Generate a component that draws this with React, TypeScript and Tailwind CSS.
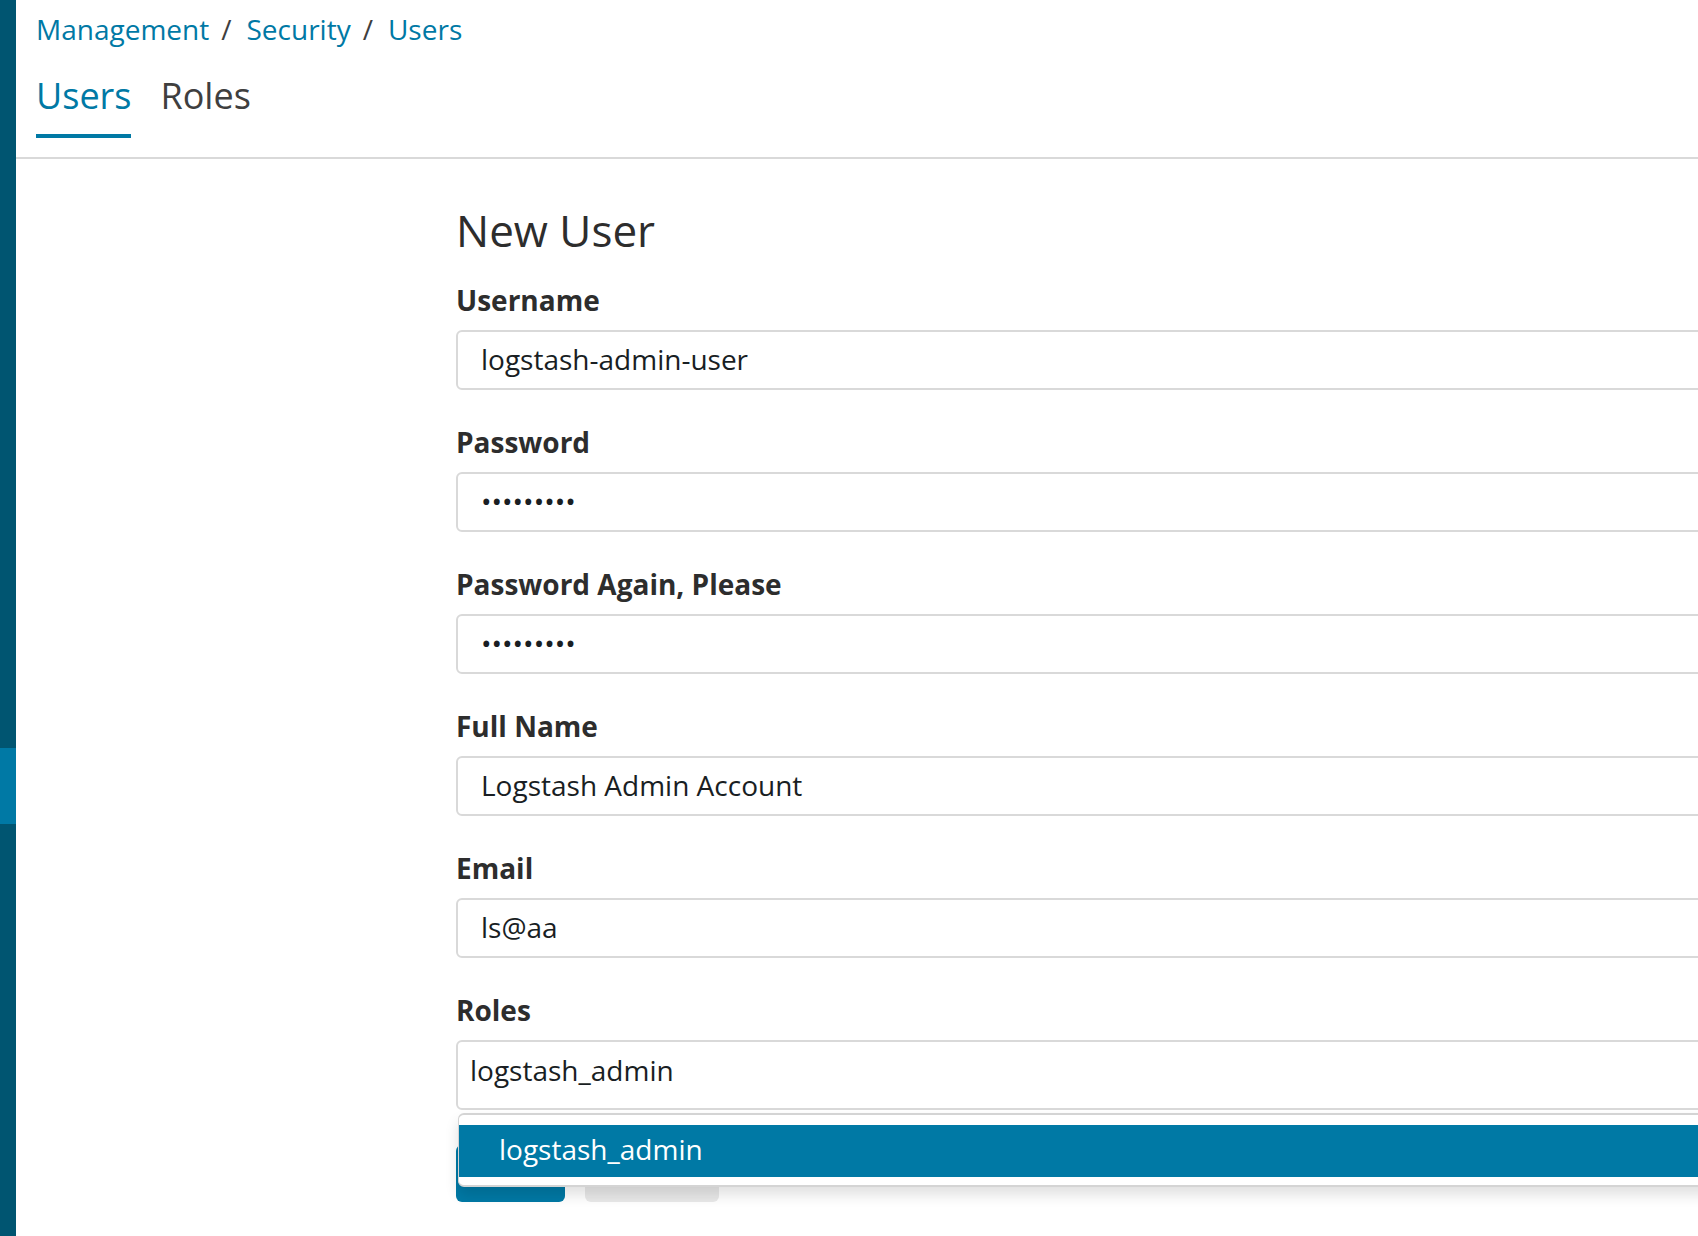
import React from 'react';

const fields = [
  { label: 'Username', value: 'logstash-admin-user' },
  { label: 'Password', value: '•••••••••' },
  { label: 'Password Again, Please', value: '•••••••••' },
  { label: 'Full Name', value: 'Logstash Admin Account' },
  { label: 'Email', value: 'ls@aa' },
];

function Sidebar() {
  return (
    <div className="flex w-[16px] shrink-0 flex-col bg-[#005571]">
      <div className="h-[748px]" />
      <div className="h-[76px] bg-[#0079a5]" />
    </div>
  );
}

function Header() {
  return (
    <div className="border-b-2 border-[#d9d9d9] pb-[19px] pl-[20px] pt-[9px]">
      {/* Breadcrumbs */}
      <div className="flex text-[28px] leading-[40px] text-[#0079a5]">
        <span>Management</span>
        <span className="ml-[12px] mr-[15px] text-[#3f3f3f]">/</span>
        <span>Security</span>
        <span className="ml-[12px] mr-[15px] text-[#3f3f3f]">/</span>
        <span>Users</span>
      </div>

      {/* Tabs */}
      <div className="mt-[23px] flex gap-[29px] text-[36px] leading-[48px]">
        <div className="border-b-4 border-[#0079a5] pb-[14px] text-[#0079a5]">Users</div>
        <div className="border-b-4 border-transparent pb-[14px] text-[#3f3f3f]">Roles</div>
      </div>
    </div>
  );
}

function Field({ label, value }: { label: string; value: string }) {
  return (
    <div className="mb-[32px]">
      <div className="mb-[10px] text-[28px] font-bold leading-[40px] text-[#2d2d2d]">{label}</div>
      <div className="flex h-[60px] items-center rounded-[6px] border-2 border-[#d9d9d9] bg-white pb-[3px] pl-[23px] text-[28px] text-[#191e23]">
        {value}
      </div>
    </div>
  );
}

export default function App() {
  return (
    <div className="flex h-[1236px] w-[1698px] overflow-hidden bg-white font-['Open_Sans',sans-serif]">
      <Sidebar />
      <div className="flex min-w-0 flex-1 flex-col">
        <Header />

        <div className="ml-[440px] mt-[43px] w-[1400px] shrink-0">
          <h2 className="mb-[22px] text-[44px] leading-[56px] text-[#2d2d2d]">New User</h2>

          {fields.map((f) => (
            <Field key={f.label} {...f} />
          ))}

          {/* Roles select */}
          <div className="mb-[10px] text-[28px] font-bold leading-[40px] text-[#2d2d2d]">Roles</div>
          <div className="relative">
            <div className="flex h-[70px] items-center rounded-[6px] border-2 border-[#d9d9d9] bg-white pb-[10px] pl-[12px] text-[28px] text-[#191e23]">
              logstash_admin
            </div>

            {/* Dropdown */}
            <div className="absolute left-[2px] right-0 top-[73px] z-10 rounded-[6px] border-x border-y-2 border-[#d4d4d4] bg-white pb-[8px] pt-[10px] shadow-[0_8px_14px_rgba(0,0,0,0.12)]">
              <div className="flex h-[52px] items-center bg-[#0079a5] pb-[4px] pl-[40px] text-[28px] text-white">
                logstash_admin
              </div>
            </div>

            {/* Buttons */}
            <div className="mt-[35px] flex gap-[20px]">
              <div className="h-[57px] w-[109px] rounded-[6px] bg-[#0079a5]" />
              <div className="h-[57px] w-[134px] rounded-[6px] bg-[#e9e9e9]" />
            </div>
          </div>
        </div>
      </div>
    </div>
  );
}
